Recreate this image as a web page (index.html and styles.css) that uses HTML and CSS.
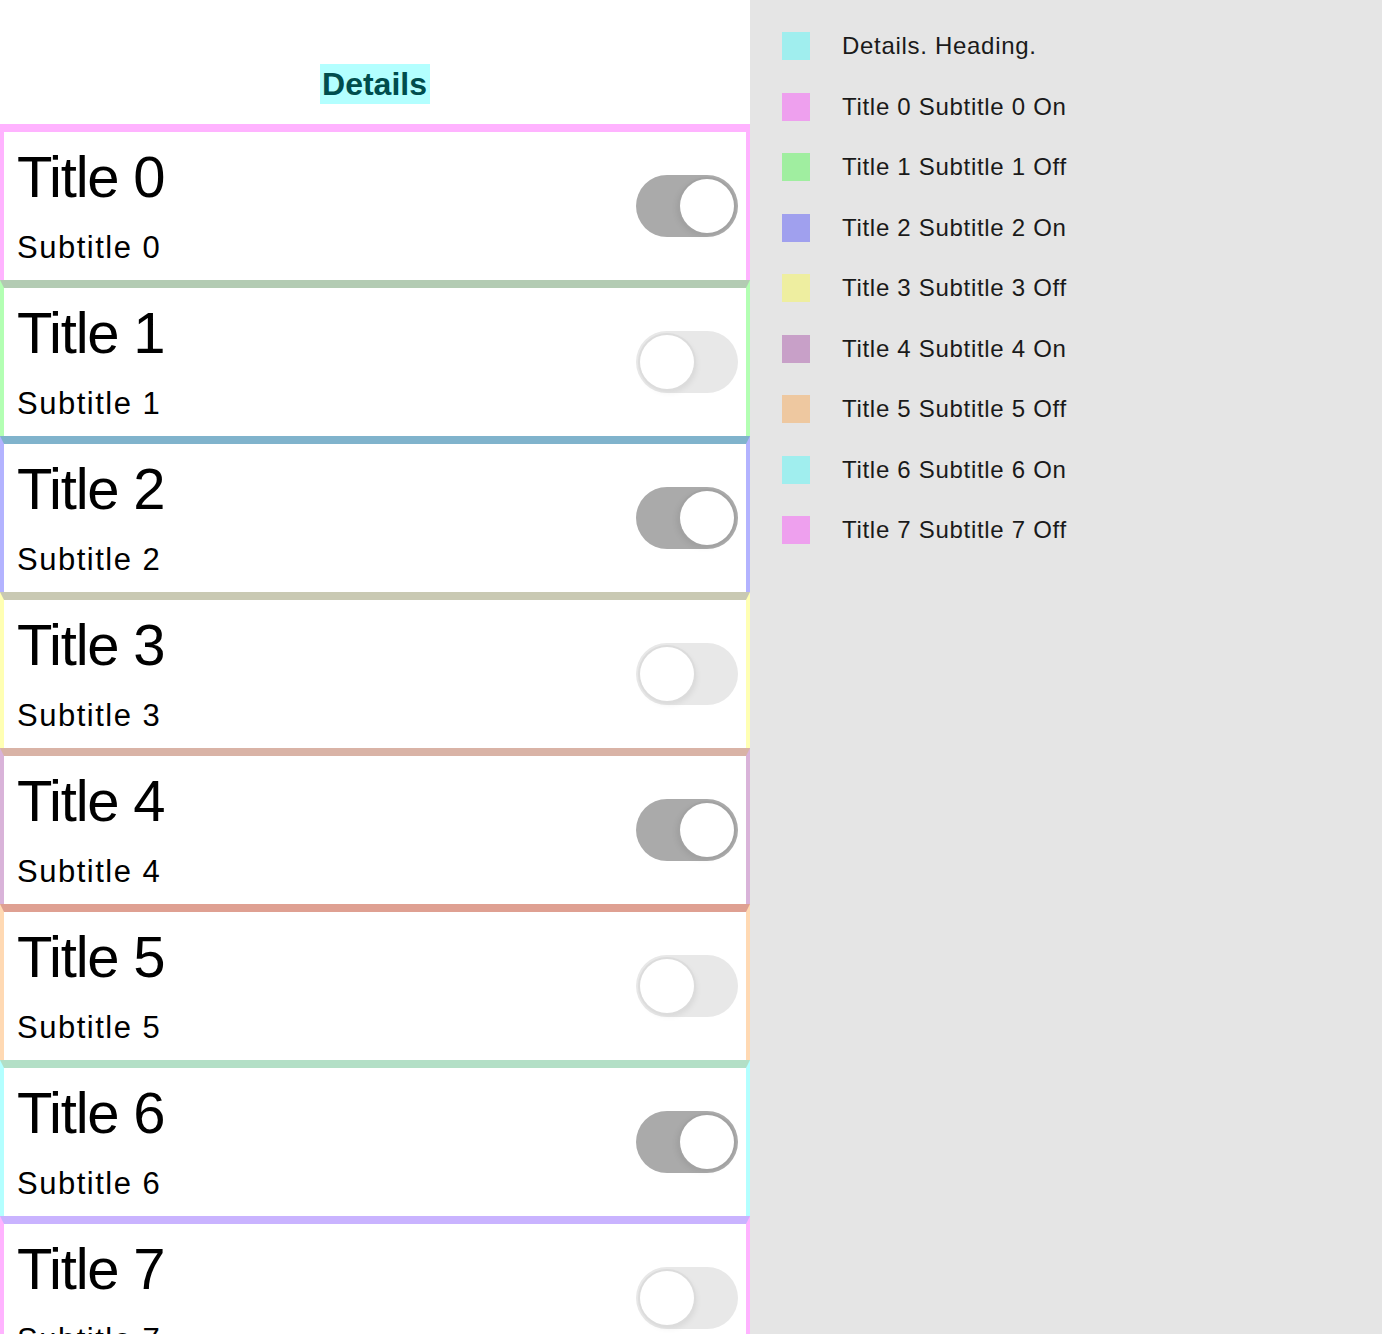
FILE: index.html
```html
<!DOCTYPE html>
<html>
<head>
<meta charset="utf-8">
<link rel="stylesheet" href="styles.css">
</head>
<body>
<main class="app">
  <section class="pane">
    <header class="head"><h1 class="head-title">Details</h1></header>
    <div class="list">
      <div class="row r0"><div class="texts"><div class="title">Title 0</div><div class="sub">Subtitle 0</div></div><div class="toggle on"><span class="knob"></span></div></div>
      <div class="row r1"><div class="texts"><div class="title">Title 1</div><div class="sub">Subtitle 1</div></div><div class="toggle"><span class="knob"></span></div></div>
      <div class="row r2"><div class="texts"><div class="title">Title 2</div><div class="sub">Subtitle 2</div></div><div class="toggle on"><span class="knob"></span></div></div>
      <div class="row r3"><div class="texts"><div class="title">Title 3</div><div class="sub">Subtitle 3</div></div><div class="toggle"><span class="knob"></span></div></div>
      <div class="row r4"><div class="texts"><div class="title">Title 4</div><div class="sub">Subtitle 4</div></div><div class="toggle on"><span class="knob"></span></div></div>
      <div class="row r5"><div class="texts"><div class="title">Title 5</div><div class="sub">Subtitle 5</div></div><div class="toggle"><span class="knob"></span></div></div>
      <div class="row r6"><div class="texts"><div class="title">Title 6</div><div class="sub">Subtitle 6</div></div><div class="toggle on"><span class="knob"></span></div></div>
      <div class="row r7"><div class="texts"><div class="title">Title 7</div><div class="sub">Subtitle 7</div></div><div class="toggle"><span class="knob"></span></div></div>
    </div>
  </section>
  <aside class="legend">
    <div class="item"><span class="sw c-cyan"></span><span class="lbl">Details. Heading.</span></div>
    <div class="item"><span class="sw c-pink"></span><span class="lbl">Title 0 Subtitle 0 On</span></div>
    <div class="item"><span class="sw c-green"></span><span class="lbl">Title 1 Subtitle 1 Off</span></div>
    <div class="item"><span class="sw c-blue"></span><span class="lbl">Title 2 Subtitle 2 On</span></div>
    <div class="item"><span class="sw c-yellow"></span><span class="lbl">Title 3 Subtitle 3 Off</span></div>
    <div class="item"><span class="sw c-mauve"></span><span class="lbl">Title 4 Subtitle 4 On</span></div>
    <div class="item"><span class="sw c-peach"></span><span class="lbl">Title 5 Subtitle 5 Off</span></div>
    <div class="item"><span class="sw c-cyan"></span><span class="lbl">Title 6 Subtitle 6 On</span></div>
    <div class="item"><span class="sw c-pink"></span><span class="lbl">Title 7 Subtitle 7 Off</span></div>
  </aside>
</main>
</body>
</html>
```
FILE: styles.css
```css
html, body {
  margin: 0;
  padding: 0;
  height: 1334px;
  overflow: hidden;
  background: #ffffff;
}
body {
  font-family: "Liberation Sans", Arial, sans-serif;
  color: #000;
}
.app {
  display: flex;
  align-items: stretch;
  min-height: 1334px;
}
.pane {
  width: 750px;
  flex: none;
  background: #fff;
}
.head {
  height: 124px;
  box-sizing: border-box;
  padding-top: 64px;
  display: flex;
  justify-content: center;
  align-items: flex-start;
}
.head-title {
  margin: 0;
  height: 40px;
  line-height: 40px;
  padding: 0 3px 0 2px;
  font-size: 32px;
  font-weight: 700;
  color: #004d4d;
  background: #b3ffff;
}
.row {
  height: 156px;
  box-sizing: border-box;
  border-top: 8px solid;
  border-left: 4px solid;
  border-right: 4px solid;
  display: flex;
  align-items: center;
  justify-content: space-between;
  padding: 0 8px 0 13px;
}
.r0 { border-top-color: #ffb3ff; border-left-color: #ffb3ff; border-right-color: #ffb3ff; }
.r1 { border-top-color: #b3cbb3; border-left-color: #b3ffb3; border-right-color: #b3ffb3; }
.r2 { border-top-color: #80b3cc; border-left-color: #b3b3ff; border-right-color: #b3b3ff; }
.r3 { border-top-color: #c9c9b3; border-left-color: #ffffb3; border-right-color: #ffffb3; }
.r4 { border-top-color: #d9b3a6; border-left-color: #d9b3d9; border-right-color: #d9b3d9; }
.r5 { border-top-color: #dfa092; border-left-color: #ffd9b3; border-right-color: #ffd9b3; }
.r6 { border-top-color: #b3dfc6; border-left-color: #b3ffff; border-right-color: #b3ffff; }
.r7 { border-top-color: #c9b3ff; border-left-color: #ffb3ff; border-right-color: #ffb3ff; }
.texts {
  align-self: stretch;
  padding-top: 16px;
}
.title {
  font-size: 58px;
  line-height: 58px;
  letter-spacing: -1.2px;
}
.sub {
  margin-top: 27px;
  font-size: 31px;
  line-height: 30px;
  letter-spacing: 1.5px;
}
.toggle {
  position: relative;
  width: 102px;
  height: 62px;
  border-radius: 31px;
  background: #e8e8e8;
  flex: none;
}
.toggle .knob {
  position: absolute;
  top: 4px;
  left: 4px;
  width: 54px;
  height: 54px;
  border-radius: 50%;
  background: #fff;
  box-shadow: 0 0 0 2px #dcdcdc, 2px 3px 6px rgba(0,0,0,0.08);
}
.toggle.on {
  background: #aaaaaa;
}
.toggle.on .knob {
  left: 44px;
  box-shadow: 0 0 0 2px #a2a2a2, -3px 2px 6px rgba(0,0,0,0.08);
}
.legend {
  flex: 1;
  background: #e5e5e5;
  padding: 32px 0 0 32px;
  display: flex;
  flex-direction: column;
  gap: 32.5px;
}
.item {
  display: flex;
  align-items: center;
  height: 28px;
  gap: 32px;
}
.sw {
  width: 28px;
  height: 28px;
  flex: none;
}
.lbl {
  font-size: 24px;
  letter-spacing: 0.7px;
  color: #1a1a1a;
  white-space: nowrap;
}
.c-cyan { background: #a0eeee; }
.c-pink { background: #eea0ee; }
.c-green { background: #a0eea0; }
.c-blue { background: #a0a0ee; }
.c-yellow { background: #eeeea0; }
.c-mauve { background: #c8a0c8; }
.c-peach { background: #eec8a0; }
```
